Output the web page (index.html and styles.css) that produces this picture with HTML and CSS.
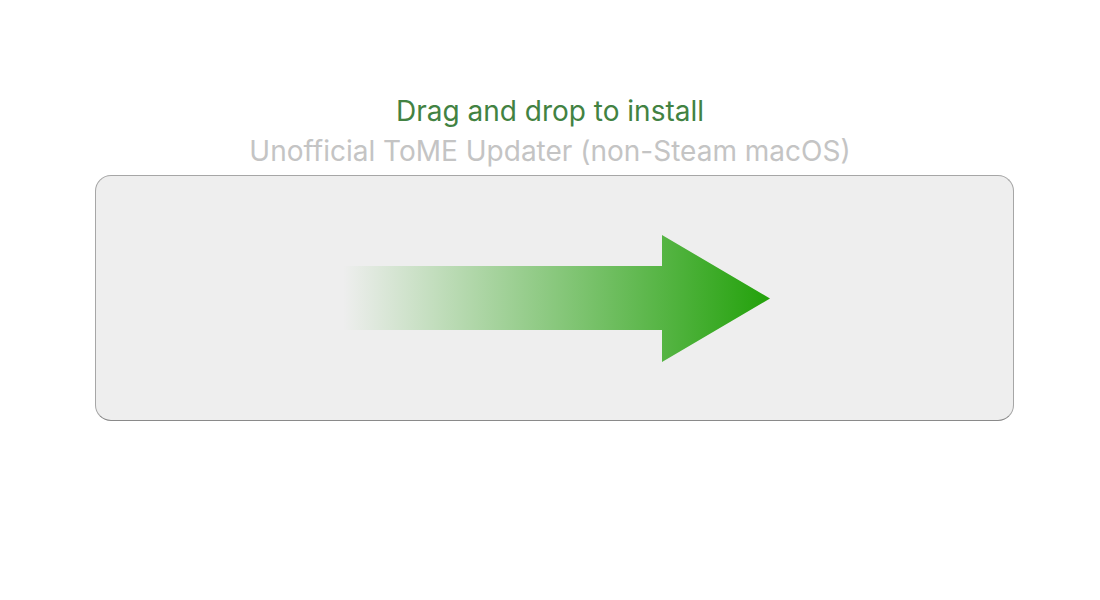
FILE: index.html
```html
<!DOCTYPE html>
<html>
<head>
<meta charset="utf-8">
<link rel="stylesheet" href="styles.css">
</head>
<body>
<div class="stage">
  <div class="title">Drag and drop to install</div>
  <div class="subtitle">Unofficial ToME Updater (non-Steam macOS)</div>
  <div class="dropzone">
    <svg class="arrow" width="428" height="127" viewBox="0 0 428 127">
      <defs>
        <linearGradient id="g" x1="0" y1="0" x2="428" y2="0" gradientUnits="userSpaceOnUse">
          <stop offset="0" stop-color="#22a10a" stop-opacity="0"/>
          <stop offset="1" stop-color="#22a10a" stop-opacity="1"/>
        </linearGradient>
      </defs>
      <polygon points="0,31 319,31 319,0 427,63.5 319,127 319,95 0,95" fill="url(#g)"/>
    </svg>
  </div>
</div>
</body>
</html>
```
FILE: styles.css
```css
html, body {
  margin: 0;
  padding: 0;
  background: #ffffff;
}
.stage {
  width: 1100px;
  height: 600px;
  display: flex;
  flex-direction: column;
  align-items: center;
  padding-top: 92px;
  box-sizing: border-box;
  font-family: Inter, "Noto Sans", sans-serif;
}
.title {
  font-size: 28px;
  line-height: 39px;
  color: #428242;
}
.subtitle {
  font-size: 28px;
  line-height: 40px;
  color: #c4c4c4;
}
.dropzone {
  margin-top: 4px;
  margin-left: 8px;
  width: 919px;
  height: 246px;
  box-sizing: border-box;
  background: #eeeeee;
  border: 1px solid #a6a6a6;
  border-bottom-color: #8a8a8a;
  border-radius: 16px;
  display: flex;
  align-items: center;
  justify-content: center;
}
.arrow {
  display: block;
  margin-left: 5px;
}
```
